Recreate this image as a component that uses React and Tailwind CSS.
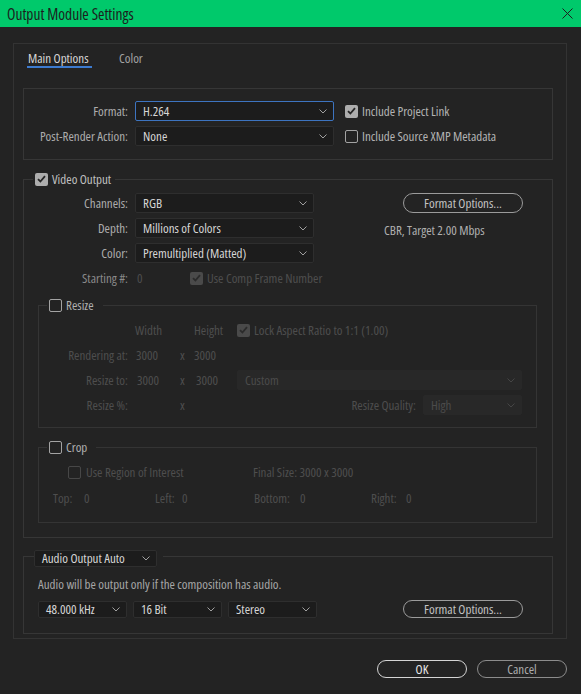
import React from 'react';

function Chevron({ dim }) {
  return (
    <svg width="8" height="5" viewBox="0 0 8 5" className="shrink-0">
      <path d="M0.5 0.5L4 4L7.5 0.5" fill="none" stroke={dim ? '#454545' : '#a0a0a0'} strokeWidth="1" />
    </svg>
  );
}

function Select({ value, w, h = 'h-[20px]', active, disabled, className = '' }) {
  const tone = disabled
    ? 'bg-[#282828] border-[#282828] text-[#4b4b4b]'
    : active
      ? 'bg-[#1c1c1c] border-[#3d74c0] text-[#d6d6d6]'
      : 'bg-[#1c1c1c] border-[#2e2e2e] text-[#d6d6d6]';
  return (
    <div className={`${w} ${h} ${tone} ${className} flex items-center justify-between border rounded-[2px] pl-[7px] pr-[6px] shrink-0`}>
      <span className="leading-none whitespace-nowrap">{value}</span>
      <Chevron dim={disabled} />
    </div>
  );
}

function Check({ checked, disabled }) {
  if (checked) {
    return (
      <div className={`w-[13px] h-[13px] rounded-[2px] flex items-center justify-center shrink-0 ${disabled ? 'bg-[#4a4a4a]' : 'bg-[#adadad]'}`}>
        <svg width="9" height="8" viewBox="0 0 9 8">
          <path d="M1 4.2L3.4 6.5L8 1.2" fill="none" stroke={disabled ? '#2b2b2b' : '#262626'} strokeWidth="1.8" />
        </svg>
      </div>
    );
  }
  return (
    <div className={`w-[13px] h-[13px] rounded-[2px] border-[1.5px] shrink-0 ${disabled ? 'border-[#474747]' : 'border-[#a3a3a3]'}`} />
  );
}

function PillButton({ children, w, h, tone = 'border-[#9b9b9b] text-[#c2c2c2]', className = '' }) {
  return (
    <div className={`${w} ${h} ${tone} ${className} rounded-full border flex items-center justify-center shrink-0 whitespace-nowrap`}>
      {children}
    </div>
  );
}

function LabelRow({ label, children }) {
  return (
    <div className="flex items-center h-[20px]">
      <span className="w-[104px] text-right text-[#adadad] whitespace-nowrap">{label}</span>
      <div className="ml-[7px] flex items-center">{children}</div>
    </div>
  );
}

export default function App() {
  const dim = 'text-[#4e4e4e]';
  return (
    <div className="w-[581px] h-[694px] bg-[#232323] text-[13px] leading-[14px] font-['Open_Sans',sans-serif] font-stretch-[80%] whitespace-nowrap overflow-hidden">
      {/* title bar */}
      <div className="h-[27px] bg-[#00c96b] flex items-center justify-between pl-[7px] pr-[8px]">
        <span className="text-[15.5px] text-[#1d1d1d]">Output Module Settings</span>
        <svg width="11" height="11" viewBox="0 0 11 11">
          <path d="M0.5 0.5L10.5 10.5M10.5 0.5L0.5 10.5" stroke="#1d1d1d" strokeWidth="1" />
        </svg>
      </div>

      <div className="pt-[16px] pl-[13px]">
        <div className="w-[554px] border border-[#333333] pb-[4px]">
          {/* tabs */}
          <div className="flex ml-[13px]">
            <div className="pt-[7px] pb-[1px] pl-[1px] w-[65px] border-b-2 border-[#3d7bd0] text-[#d8d8d8]">Main Options</div>
            <div className="pt-[7px] ml-[27px] text-[#a4a4a4]">Color</div>
          </div>

          {/* format group */}
          <div className="w-[530px] ml-[9px] mt-[20px] border border-[#363636] pt-[12px] pb-[13px] flex flex-col gap-[5px]">
            <div className="flex items-center">
              <LabelRow label="Format:">
                <Select value="H.264" w="w-[199px]" active />
              </LabelRow>
              <div className="ml-[11px] flex items-center gap-[4px] text-[#b4b4b4]">
                <Check checked />
                <span>Include Project Link</span>
              </div>
            </div>
            <div className="flex items-center">
              <LabelRow label="Post-Render Action:">
                <Select value="None" w="w-[199px]" />
              </LabelRow>
              <div className="ml-[11px] flex items-center gap-[4px] text-[#b4b4b4]">
                <Check />
                <span>Include Source XMP Metadata</span>
              </div>
            </div>
          </div>

          {/* video output */}
          <fieldset className="w-[530px] ml-[9px] mt-[12px] border border-[#363636] pb-[14px]">
            <legend className="ml-[9px] pl-[2px] pr-[4px]">
              <div className="flex items-center gap-[4px] text-[#c0c0c0]">
                <Check checked />
                <span>Video Output</span>
              </div>
            </legend>
            <div className="pt-[7px]">
              <div className="flex">
                <div className="flex flex-col gap-[5px]">
                  <LabelRow label="Channels:"><Select value="RGB" w="w-[179px]" /></LabelRow>
                  <LabelRow label="Depth:"><Select value="Millions of Colors" w="w-[179px]" /></LabelRow>
                  <LabelRow label="Color:"><Select value="Premultiplied (Matted)" w="w-[179px]" /></LabelRow>
                </div>
                <div className="ml-[70px] flex flex-col">
                  <PillButton w="w-[120px] ml-[19px]" h="h-[20px]">Format Options...</PillButton>
                  <span className="mt-[10px] text-[#b0b0b0]">CBR, Target 2.00 Mbps</span>
                </div>
              </div>
              <div className="flex items-center h-[20px] mt-[5px]">
                <span className="w-[104px] text-right text-[#8a8a8a]">Starting #:</span>
                <span className={`ml-[9px] w-[53px] ${dim}`}>0</span>
                <Check checked disabled />
                <span className={`ml-[4px] ${dim}`}>Use Comp Frame Number</span>
              </div>

              {/* resize */}
              <fieldset className="w-[499px] ml-[14px] mt-[10px] border border-[#343434] pb-[12px]">
                <legend className="ml-[8px] pl-[2px] pr-[9px]">
                  <div className="flex items-center gap-[4px] text-[#b0b0b0]">
                    <Check />
                    <span>Resize</span>
                  </div>
                </legend>
                <div className={`pt-[8px] flex flex-col gap-[5px] ${dim}`}>
                  <div className="flex items-center h-[20px]">
                    <span className="w-[89px]" />
                    <span className="ml-[7px] w-[45px]">Width</span>
                    <span className="w-[14px]" />
                    <span className="w-[43px]">Height</span>
                    <Check checked disabled />
                    <span className="ml-[4px]">Lock Aspect Ratio to 1:1 (1.00)</span>
                  </div>
                  <div className="flex items-center h-[20px]">
                    <span className="w-[89px] text-right">Rendering at:</span>
                    <span className="ml-[7px] w-[45px] pl-[1px]">3000</span>
                    <span className="w-[14px]">x</span>
                    <span className="w-[43px]">3000</span>
                  </div>
                  <div className="flex items-center h-[20px]">
                    <span className="w-[89px] text-right">Resize to:</span>
                    <span className="ml-[7px] w-[45px] pl-[2px]">3000</span>
                    <span className="w-[14px]">x</span>
                    <span className="w-[43px] pl-[2px]">3000</span>
                    <Select value="Custom" w="w-[285px]" disabled />
                  </div>
                  <div className="flex items-center h-[20px]">
                    <span className="w-[89px] text-right">Resize %:</span>
                    <span className="ml-[7px] w-[45px]" />
                    <span className="w-[14px]">x</span>
                    <span className="w-[43px]" />
                    <div className="w-[285px] flex items-center justify-end gap-[7px]">
                      <span>Resize Quality:</span>
                      <Select value="High" w="w-[99px]" disabled />
                    </div>
                  </div>
                </div>
              </fieldset>

              {/* crop */}
              <fieldset className="w-[499px] ml-[14px] mt-[12px] border border-[#343434] pb-[14px]">
                <legend className="ml-[8px] pl-[2px] pr-[9px]">
                  <div className="flex items-center gap-[4px] text-[#b0b0b0]">
                    <Check />
                    <span>Crop</span>
                  </div>
                </legend>
                <div className={`pt-[8px] ${dim}`}>
                  <div className="flex items-center h-[20px]">
                    <span className="ml-[29px]"><Check disabled /></span>
                    <span className="ml-[5px] w-[167px]">Use Region of Interest</span>
                    <span>Final Size: 3000 x 3000</span>
                  </div>
                  <div className="flex items-center h-[20px] mt-[6px] pl-[14px]">
                    <span className="w-[31px]">Top:</span>
                    <span className="w-[71px]">0</span>
                    <span className="w-[27px]">Left:</span>
                    <span className="w-[72px]">0</span>
                    <span className="w-[46px]">Bottom:</span>
                    <span className="w-[71px]">0</span>
                    <span className="w-[35px]">Right:</span>
                    <span>0</span>
                  </div>
                </div>
              </fieldset>
            </div>
          </fieldset>

          {/* audio */}
          <fieldset className="w-[530px] ml-[9px] mt-[7px] border border-[#363636] pb-[15px]">
            <legend className="ml-[10px] pt-[5px] pr-[6px]">
              <Select value="Audio Output Auto" w="w-[123px]" h="h-[17px]" />
            </legend>
            <div className="pl-[14px] pt-[10px]">
              <div className="text-[#a6a6a6]">Audio will be output only if the composition has audio.</div>
              <div className="flex items-center mt-[9px]">
                <Select value="48.000 kHz" w="w-[89px]" h="h-[17px]" />
                <Select value="16 Bit" w="w-[89px]" h="h-[17px]" className="ml-[6px]" />
                <Select value="Stereo" w="w-[89px]" h="h-[17px]" className="ml-[6px]" />
                <PillButton w="w-[120px] ml-[86px]" h="h-[18px]">Format Options...</PillButton>
              </div>
            </div>
          </fieldset>
        </div>

        {/* dialog buttons */}
        <div className="flex justify-end gap-[10px] mt-[21px] pr-[14px]">
          <PillButton w="w-[90px]" h="h-[18px]" tone="border-[#d4d4d4] text-[#e8e8e8]">OK</PillButton>
          <PillButton w="w-[90px]" h="h-[18px]" tone="border-[#8c8c8c] text-[#adadad]">Cancel</PillButton>
        </div>
      </div>
    </div>
  );
}
